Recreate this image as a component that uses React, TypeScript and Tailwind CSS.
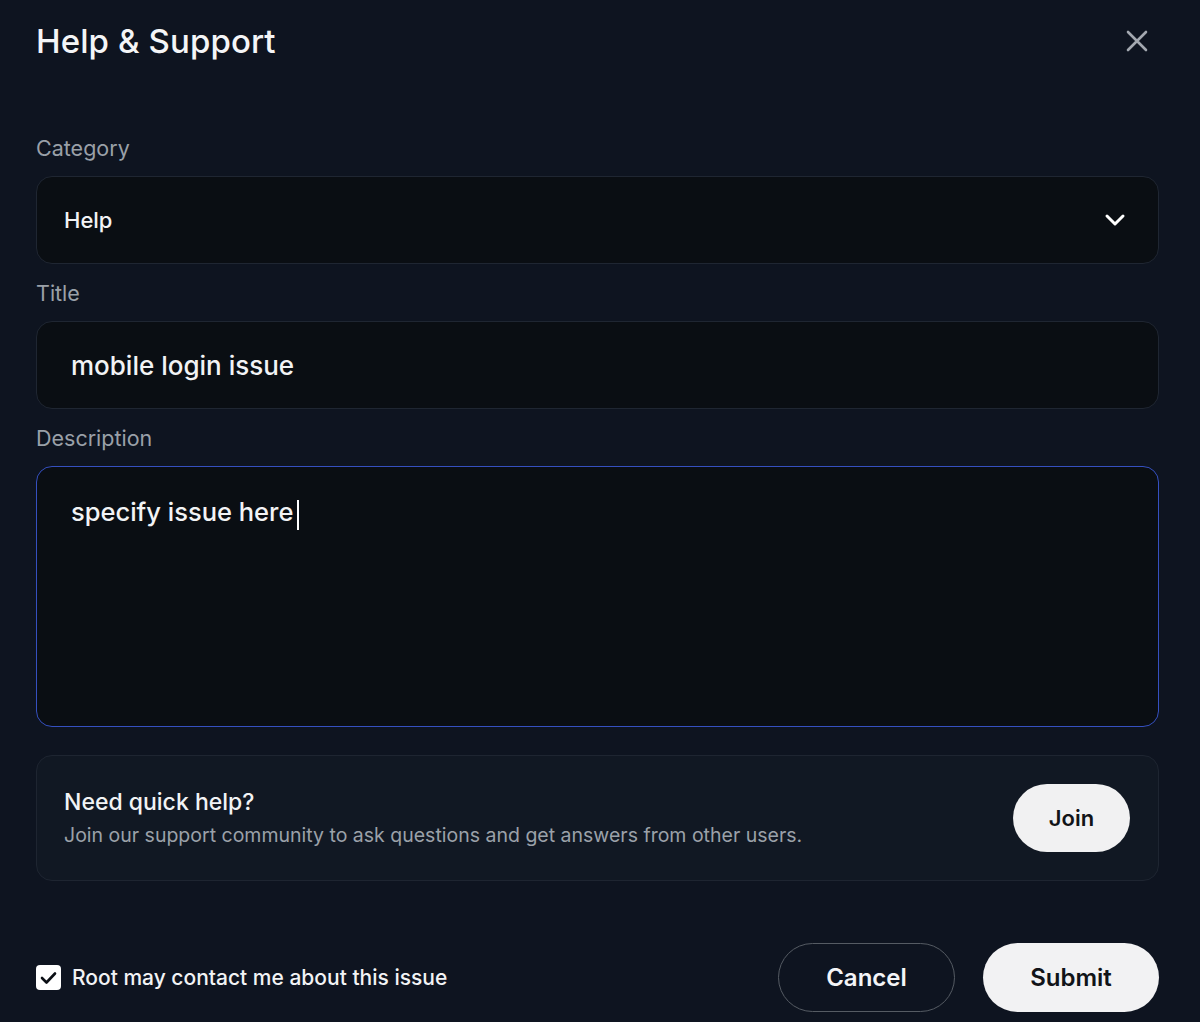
import React from "react";

export default function App() {
  return (
    <div
      className="w-[1200px] h-[1022px] bg-[#0e1420] text-white overflow-hidden pl-[36px] pr-[41px]"
      style={{ fontFamily: "Inter, 'Noto Sans', sans-serif" }}
    >
      <div className="h-[84px] flex items-center justify-between">
        <h1 className="text-[33px] font-medium tracking-[0.1px] text-[#f4f5f7]">Help &amp; Support</h1>
        <svg width="22" height="22" viewBox="0 0 22 22" className="mr-[11px] mt-[-2px]" fill="none" stroke="#a3a8b0" strokeWidth="2.6" strokeLinecap="round">
          <path d="M2 2 L20 20 M20 2 L2 20" />
        </svg>
      </div>

      <div className="mt-[50px] text-[21.5px] leading-[28px] text-[#9aa0a8]">Category</div>
      <div className="mt-[14px] h-[88px] rounded-[16px] bg-[#0a0e13] border border-[#1f2632] flex items-center justify-between pl-[27px] pr-[32px]">
        <span className="text-[22px] font-medium text-[#f2f3f5]">Help</span>
        <svg width="22" height="14" viewBox="0 0 22 14" fill="none" stroke="#ffffff" strokeWidth="3" strokeLinecap="round" strokeLinejoin="round">
          <path d="M3 3 L11 11 L19 3" />
        </svg>
      </div>

      <div className="mt-[15px] text-[21.5px] leading-[28px] text-[#9aa0a8]">Title</div>
      <div className="mt-[14px] h-[88px] rounded-[16px] bg-[#0a0e13] border border-[#1f2632] flex items-center pl-[34px]">
        <span className="text-[26px] font-medium text-[#f2f3f5]">mobile login issue</span>
      </div>

      <div className="mt-[15px] text-[21.5px] leading-[28px] text-[#9aa0a8]">Description</div>
      <div className="mt-[14px] h-[261px] rounded-[16px] bg-[#0a0e13] border border-[#3550c0] pl-[34px] pt-[27px]">
        <span className="text-[25.5px] font-medium text-[#f2f3f5] leading-[36px]">specify issue here</span>
        <span className="inline-block w-[2px] h-[30px] bg-white align-middle ml-[4px] mb-[4px]"></span>
      </div>

      <div className="mt-[28px] h-[126px] rounded-[16px] bg-[#111823] border border-[#1e2531] flex items-center justify-between pl-[27px] pr-[28px]">
        <div className="flex flex-col mt-[-2px]">
          <span className="text-[23px] font-medium leading-[30px] text-[#f2f3f5]">Need quick help?</span>
          <span className="mt-[5px] text-[19.5px] leading-[26px] text-[#9ba1a9]">Join our support community to ask questions and get answers from other users.</span>
        </div>
        <button className="w-[117px] h-[68px] rounded-full bg-[#f1f1f2] text-[#111418] text-[22px] font-semibold">Join</button>
      </div>

      <div className="mt-[62px] flex items-center justify-between">
        <div className="flex items-center">
          <div className="w-[25px] h-[25px] rounded-[4px] bg-white flex items-center justify-center">
            <svg width="17" height="14" viewBox="0 0 17 14" fill="none" stroke="#0b0f15" strokeWidth="2.6" strokeLinecap="round" strokeLinejoin="round">
              <path d="M2 7 L6.5 11.5 L15 2.5" />
            </svg>
          </div>
          <span className="ml-[11px] text-[21px] font-medium text-[#f2f3f5]">Root may contact me about this issue</span>
        </div>
        <div className="flex items-center gap-[28px]">
          <button className="w-[177px] h-[69px] rounded-full border border-[#555b63] text-[24px] font-semibold text-[#f4f5f7]">Cancel</button>
          <button className="w-[176px] h-[69px] rounded-full bg-[#f2f2f3] text-[24px] font-semibold text-[#111418]">Submit</button>
        </div>
      </div>
    </div>
  );
}
